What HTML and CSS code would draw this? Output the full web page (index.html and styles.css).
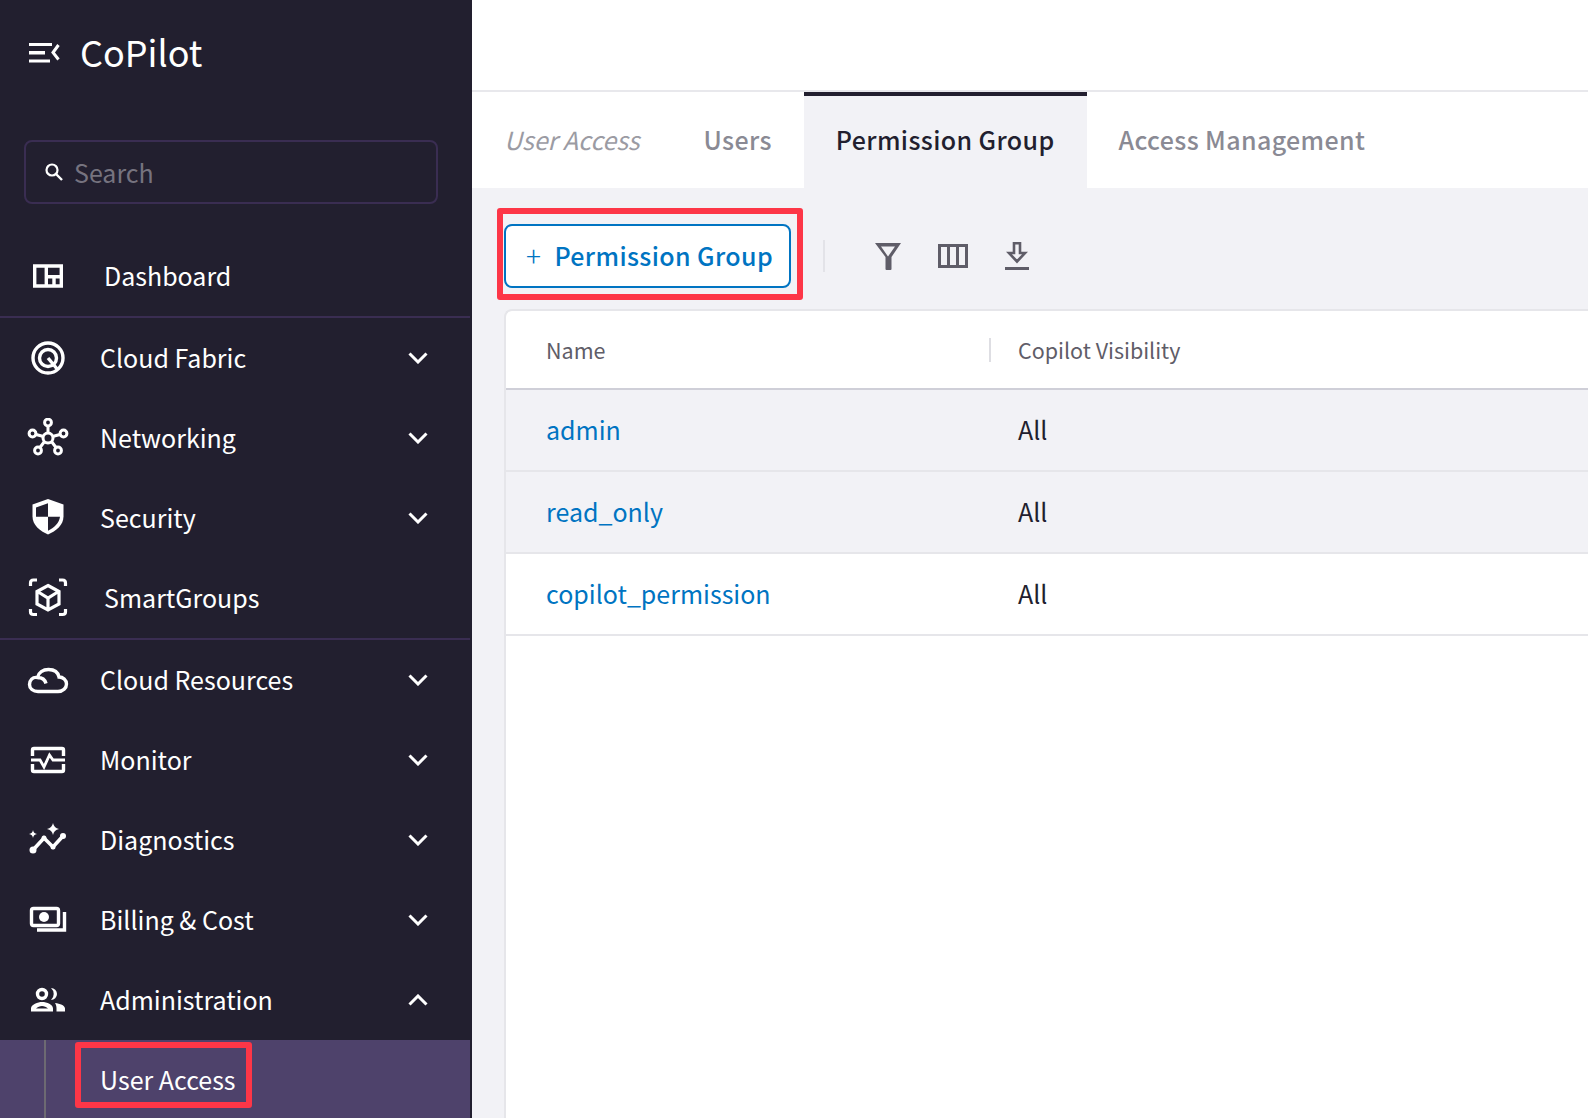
FILE: index.html
```html
<!DOCTYPE html>
<html lang="en">
<head>
<meta charset="utf-8">
<title>CoPilot - Permission Group</title>
<link rel="stylesheet" href="styles.css">
</head>
<body>
<div class="app">
  <aside class="sidebar">
    <div class="brand">
      <svg class="brand-icon" width="32" height="22" viewBox="0 0 32 22"><path d="M0 1h23v3H0zM0 9h16v3.500H0zM0 17.500h21v3H0z" fill="#fff"/><path d="M29.500 3L24 10.500l5.500 7" fill="none" stroke="#fff" stroke-width="3"/></svg>
      <span class="brand-name">CoPilot</span>
    </div>
    <div class="search">
      <svg class="search-icon" width="18" height="18" viewBox="0 0 18 18"><circle cx="7" cy="7" r="5.500" fill="none" stroke="#fff" stroke-width="2.200"/><path d="M11 11l6 6" stroke="#fff" stroke-width="2.400"/></svg>
      <span class="search-text">Search</span>
    </div>
    <nav>
      <div class="nav-item dash nudge">
        <svg class="nav-icon" viewBox="0 0 60 40"><path d="M16.700 9h26.600v20H16.700zM28.300 9v20M28.300 19.700h15M36 19.700V29" fill="none" stroke="#fff" stroke-width="3.400"/></svg>
        <span class="label">Dashboard</span>
      </div>
      <div class="divider"></div>
      <div class="nav-item">
        <svg class="nav-icon" viewBox="0 0 60 40"><circle cx="30" cy="20" r="15" fill="none" stroke="#fff" stroke-width="3.400"/><circle cx="30" cy="20" r="8.500" fill="none" stroke="#fff" stroke-width="3.400"/><path d="M30 20l10 12" stroke="#fff" stroke-width="3.400"/></svg>
        <span class="label">Cloud Fabric</span>
        <svg class="chev" width="20" height="12" viewBox="0 0 20 12"><path d="M1.500 1.500L10 10l8.500-8.500" fill="none" stroke="#fff" stroke-width="3"/></svg>
      </div>
      <div class="nav-item">
        <svg class="nav-icon" viewBox="0 0 60 40"><g fill="none" stroke="#fff" stroke-width="3"><circle cx="30" cy="20" r="5"/><circle cx="30" cy="4.500" r="3.400"/><circle cx="14.500" cy="15.500" r="3.400"/><circle cx="45.500" cy="15.500" r="3.400"/><circle cx="20" cy="32.500" r="3.400"/><circle cx="40" cy="32.500" r="3.400"/><path d="M30 8v7M18 16.500l7.500 2M42 16.500l-7.500 2M22 29.500l4.500-6M38 29.500l-4.500-6"/></g></svg>
        <span class="label">Networking</span>
        <svg class="chev" width="20" height="12" viewBox="0 0 20 12"><path d="M1.500 1.500L10 10l8.500-8.500" fill="none" stroke="#fff" stroke-width="3"/></svg>
      </div>
      <div class="nav-item">
        <svg class="nav-icon" viewBox="0 0 60 40"><path d="M30 1l15.500 5.500v12c0 8.500-7.500 14.500-15.500 18-8-3.500-15.500-9.500-15.500-18v-12z" fill="#fff"/><path d="M30 5.200L18 9.500v9.200h12zM30 18.700h12c-.8 6.300-6 11-12 14z" fill="#221f2f"/></svg>
        <span class="label">Security</span>
        <svg class="chev" width="20" height="12" viewBox="0 0 20 12"><path d="M1.500 1.500L10 10l8.500-8.500" fill="none" stroke="#fff" stroke-width="3"/></svg>
      </div>
      <div class="nav-item nudge">
        <svg class="nav-icon" viewBox="0 0 60 40"><g fill="none" stroke="#fff" stroke-width="3.200"><path d="M30 7.500l11 6V26l-11 6-11-6V13.500zM19.500 13.500L30 20l10.500-6.500M30 20v11.500"/><path d="M12.500 8V5q0-3 3-3H19M41 2h3.500q3 0 3 3v3M12.500 31v3q0 2.500 3 2.500H19M41 36.500h3.500q3 0 3-2.500v-3"/></g></svg>
        <span class="label">SmartGroups</span>
      </div>
      <div class="divider"></div>
      <div class="nav-item">
        <svg class="nav-icon" viewBox="0 0 60 40"><path d="M20 31.500h20c5 0 8.500-3.500 8.500-7.500s-3.500-7-7.500-7c-1-5-5-7.500-10.500-7.500-5.500 0-10 3-11 8-5-1-8 3-8 7 0 4 3.500 7 8.500 7zM19.500 17.500c4 0 7.500 2 8.500 6" fill="none" stroke="#fff" stroke-width="3.400"/></svg>
        <span class="label">Cloud Resources</span>
        <svg class="chev" width="20" height="12" viewBox="0 0 20 12"><path d="M1.500 1.500L10 10l8.500-8.500" fill="none" stroke="#fff" stroke-width="3"/></svg>
      </div>
      <div class="nav-item">
        <svg class="nav-icon" viewBox="0 0 60 40"><g fill="none" stroke="#fff" stroke-width="3.400"><path d="M14.500 16v-6q0-1.500 1.500-1.500h28q1.500 0 1.500 1.500v6M14.500 24v6q0 1.500 1.500 1.500h28q1.500 0 1.500-1.500v-6"/><path d="M13 20h9l4 7 5.500-12 3.500 5h12" stroke-width="2.800"/></g></svg>
        <span class="label">Monitor</span>
        <svg class="chev" width="20" height="12" viewBox="0 0 20 12"><path d="M1.500 1.500L10 10l8.500-8.500" fill="none" stroke="#fff" stroke-width="3"/></svg>
      </div>
      <div class="nav-item">
        <svg class="nav-icon" viewBox="0 0 60 40"><path d="M15 30l11-12 9 9 10-11" fill="none" stroke="#fff" stroke-width="3.600"/><g fill="#fff"><circle cx="15" cy="30" r="3.500"/><circle cx="26" cy="18" r="2.500"/><circle cx="35" cy="27" r="2.500"/><circle cx="45" cy="16" r="3"/><path d="M35 3q1 5 6 6-5 1-6 6-1-5-6-6 5-1 6-6zM15 10q.5 3.500 4 4-3.500.5-4 4-.5-3.500-4-4 3.500-.5 4-4z"/></g></svg>
        <span class="label">Diagnostics</span>
        <svg class="chev" width="20" height="12" viewBox="0 0 20 12"><path d="M1.500 1.500L10 10l8.500-8.500" fill="none" stroke="#fff" stroke-width="3"/></svg>
      </div>
      <div class="nav-item">
        <svg class="nav-icon" viewBox="0 0 60 40"><rect x="13.500" y="8.500" width="27" height="17" rx="2" fill="none" stroke="#fff" stroke-width="3.400"/><circle cx="26" cy="17" r="5" fill="#fff"/><path d="M46.500 12v18H19" fill="none" stroke="#fff" stroke-width="3.400"/></svg>
        <span class="label">Billing &amp; Cost</span>
        <svg class="chev" width="20" height="12" viewBox="0 0 20 12"><path d="M1.500 1.500L10 10l8.500-8.500" fill="none" stroke="#fff" stroke-width="3"/></svg>
      </div>
      <div class="nav-item">
        <svg class="nav-icon" viewBox="0 0 60 40"><circle cx="24" cy="14" r="4.500" fill="none" stroke="#fff" stroke-width="3.400"/><path fill="#fff" fill-rule="evenodd" d="M33 8a6 6 0 0 1 0 12 8 8 0 0 0 0-12zM13 31.500v-3c0-4 7-6.500 11-6.500 5 0 11 2.500 11 6.500v3zM18 28.500h12c-1.500-1.500-4-2.500-6-2.500s-4.500 1-6 2.500zM37 23c5 .5 10 2.500 10 5.500v3h-8.500v-3c0-2-.5-4-1.500-5.500z"/></svg>
        <span class="label">Administration</span>
        <svg class="chev" width="20" height="12" viewBox="0 0 20 12"><path d="M1.500 10.500L10 2l8.500 8.500" fill="none" stroke="#fff" stroke-width="3"/></svg>
      </div>
      <div class="sub-menu">
        <div class="sub-item">
          <span class="sub-label">User Access</span>
          <span class="callout callout-sub"></span>
        </div>
      </div>
    </nav>
  </aside>
  <main class="main">
    <div class="topbar"></div>
    <div class="tabs">
      <span class="tab crumb">User Access</span>
      <span class="tab">Users</span>
      <span class="tab active">Permission Group</span>
      <span class="tab">Access Management</span>
    </div>
    <div class="toolbar">
      <div class="add-wrap">
        <button class="add-btn"><span class="plus">+</span><span>Permission Group</span></button>
        <span class="callout callout-btn"></span>
      </div>
      <span class="tool-sep"></span>
      <svg class="tool" width="28" height="28" viewBox="0 0 28 28"><path fill="#5f5d68" fill-rule="evenodd" d="M1 1h26L17.500 15v12q0 1-1 1h-4q-1 0-1-1V15zM7 4.500h14l-7 10z"/></svg>
      <svg class="tool" width="30" height="24" viewBox="0 0 30 24"><path d="M1.500 1.500h27v21h-27zM10.500 1.500v21M19.500 1.500v21" fill="none" stroke="#5f5d68" stroke-width="3"/></svg>
      <svg class="tool" width="24" height="28" viewBox="0 0 24 28"><path d="M9 1.300h6V11h5l-8 8.500L4 11h5z" fill="none" stroke="#5f5d68" stroke-width="2.600"/><path d="M0 25h24v3H0z" fill="#5f5d68"/></svg>
    </div>
    <section class="card">
      <div class="row head">
        <div class="cell name">Name</div>
        <div class="cell vis">Copilot Visibility</div>
      </div>
      <div class="row shaded">
        <div class="cell name"><a class="link">admin</a></div>
        <div class="cell val">All</div>
      </div>
      <div class="row shaded">
        <div class="cell name"><a class="link">read_only</a></div>
        <div class="cell val">All</div>
      </div>
      <div class="row">
        <div class="cell name"><a class="link">copilot_permission</a></div>
        <div class="cell val">All</div>
      </div>
    </section>
  </main>
</div>
</body>
</html>
```
FILE: styles.css
```css
* { box-sizing: border-box; }
html, body { margin: 0; height: 100%; }
body {
  font-family: "Noto Sans CJK SC", "Noto Sans", sans-serif;
  color: #221f2f;
  background: #fff;
  overflow: hidden;
}
.app { display: flex; height: 1118px; overflow: hidden; }

.sidebar {
  flex: 0 0 472px;
  background: #221f2f;
  color: #fff;
  overflow: hidden;
  padding-right: 2px;
}
.brand { display: flex; align-items: center; height: 106px; padding-left: 29px; }
.brand-icon { flex: none; }
.brand-name { font-size: 36px; margin-left: 19px; line-height: 1; padding-bottom: 4px; }
.search {
  display: flex;
  align-items: center;
  height: 64px;
  margin: 34px 32px 33px 24px;
  border: 2px solid #3a2d52;
  border-radius: 8px;
  padding-left: 19px;
}
.search-text { font-size: 25px; color: #76737f; margin-left: 11px; line-height: 1; }

.nav-item { display: flex; align-items: center; height: 80px; padding-left: 18px; padding-right: 42px; }
.nav-item.dash { height: 79px; }
.nav-icon { width: 60px; height: 40px; flex: none; }
.label { font-size: 25px; margin-left: 22px; line-height: 1; flex: 1; padding-bottom: 2px; }
.nudge .label { margin-left: 26px; }
.divider { height: 2px; background: #3a2d52; }

.sub-menu { background: #4e426b; height: 78px; padding-left: 44px; }
.sub-item {
  position: relative;
  height: 100%;
  border-left: 2px solid #6d6a72;
  padding-left: 54px;
  display: flex;
  align-items: center;
}
.sub-label { font-size: 25px; line-height: 1; }

.callout {
  position: absolute;
  border: 6px solid #fd3647;
  border-radius: 3px;
  pointer-events: none;
}
.callout-sub { left: 29px; top: 2px; width: 177px; height: 66px; }
.callout-btn { left: -7px; top: -16px; right: -12px; bottom: -12px; }

.main { flex: 1; min-width: 0; display: flex; flex-direction: column; background: #f2f2f6; }
.topbar { height: 92px; flex: none; background: #fff; border-bottom: 2px solid #e8e8ec; }
.tabs { display: flex; height: 96px; flex: none; background: #fff; }
.tab {
  display: flex;
  align-items: center;
  padding: 0 32px 2px;
  font-size: 25px;
  font-weight: 500;
  letter-spacing: .38px;
  color: #8a8a94;
  line-height: 1;
}
.crumb { font-style: italic; font-weight: 400; letter-spacing: 0; color: #9b9ba3; }
.tab.active { background: #f2f2f6; color: #221f2f; border-top: 4px solid #221f2f; padding-bottom: 6px; }

.toolbar { display: flex; align-items: center; flex: none; margin: 36px 0 21px 32px; height: 64px; }
.add-wrap { position: relative; flex: none; }
.add-btn {
  display: flex;
  align-items: center;
  width: 287px;
  height: 64px;
  padding: 0 0 2px 20px;
  background: #fff;
  border: 2px solid #0074c2;
  border-radius: 8px;
  color: #0074c2;
  white-space: nowrap;
  letter-spacing: .38px;
  font: 500 25px "Noto Sans CJK SC", "Noto Sans", sans-serif;
}
.plus { font-weight: 300; font-size: 28px; margin-right: 13px; line-height: 1; }
.tool-sep { width: 2px; height: 32px; background: #e3e3e8; margin: 0 49px 0 32px; }
.tool { flex: none; }
.tool + .tool { margin-left: 36px; }
.tool + .tool + .tool { margin-left: 37px; }

.card {
  flex: 1;
  margin-left: 32px;
  width: 1200px;
  background: #fff;
  border: 2px solid #e6e6ea;
  border-right: 0;
  border-bottom: 0;
  border-radius: 8px 0 0 0;
}
.row { display: grid; grid-template-columns: 483px 1fr; height: 82px; border-bottom: 2px solid #e6e6ea; }
.row.head { height: 79px; border-bottom-color: #cfcfd8; }
.row.shaded { background: #f2f2f6; }
.cell { display: flex; align-items: center; line-height: 1; padding-bottom: 2px; }
.name { padding-left: 40px; }
.head .cell { font-size: 21.5px; color: #5f5d68; padding-bottom: 0; }
.vis::before { content: ""; width: 2px; height: 24px; background: #dedee3; margin-right: 27px; }
.val { padding-left: 29px; font-size: 25px; }
.link { font-size: 25px; color: #0074c2; }
```
